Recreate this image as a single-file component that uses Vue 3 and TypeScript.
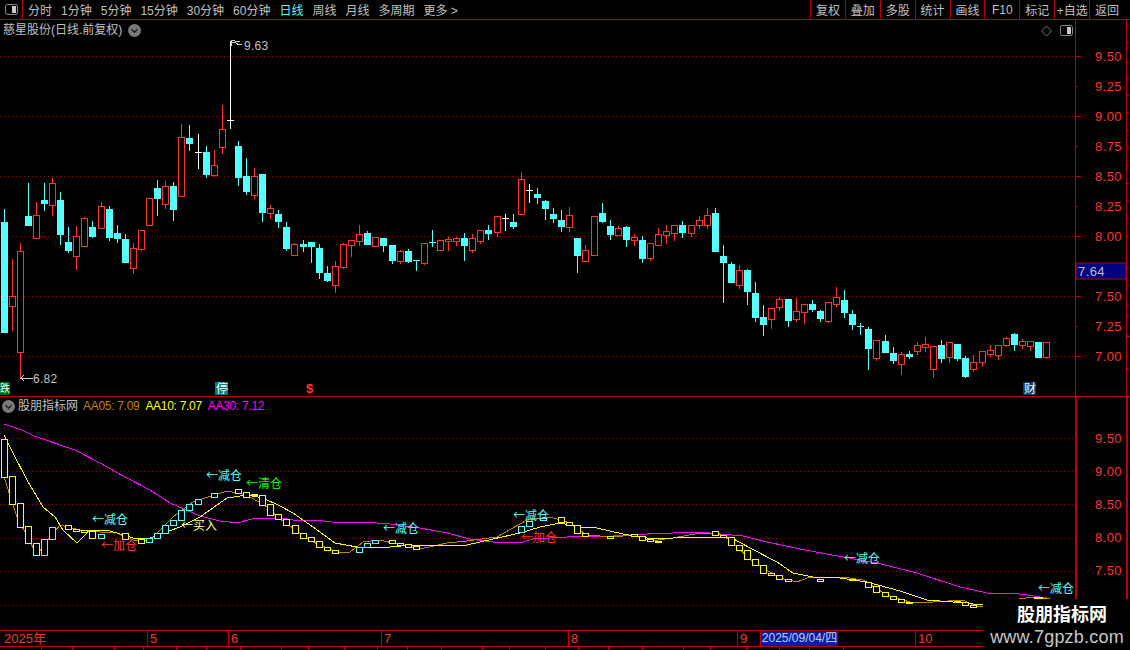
<script setup lang="ts">
type Candle = [number, string, number, number, number, number]
const candles: Candle[] = [
  [4,'c',222,332,209,332],[12,'r',296,306,259,330],[20,'r',251,352,243,378],[28,'c',216,225,183,225],[36,'r',215,238,202,238],
  [44,'c',200,203,183,210],[52,'r',183,205,178,215],[60,'c',200,234,192,244],[68,'c',242,250,227,252],[76,'r',236,256,226,269],
  [84,'r',218,246,217,246],[92,'c',227,236,221,237],[101,'r',206,228,202,228],[109,'c',209,237,206,240],[117,'c',233,238,225,242],
  [125,'c',239,262,234,262],[133,'r',248,268,243,273],[141,'r',230,249,230,250],[149,'r',198,225,198,225],[157,'c',188,198,180,215],
  [165,'r',186,204,181,208],[173,'c',186,209,182,220],[181,'r',137,196,124,196],[189,'c',138,143,125,150],[198,'w',152,152,134,168],
  [206,'c',152,174,146,177],[214,'r',165,175,150,176],[222,'r',129,147,105,153],[230,'w',120,120,41,128],[238,'c',146,177,141,185],
  [246,'c',176,191,158,194],[254,'r',176,195,168,198],[262,'c',174,212,174,221],[270,'r',208,213,205,218],[278,'c',214,221,210,227],
  [286,'c',227,248,222,250],[294,'r',244,255,243,255],[303,'c',244,246,240,251],[311,'c',242,246,242,262],[319,'c',248,272,244,278],
  [327,'c',273,280,266,281],[335,'r',266,285,261,292],[343,'r',244,267,243,268],[351,'r',240,245,240,256],[359,'r',234,241,225,245],
  [367,'c',233,244,231,244],[375,'r',237,246,237,246],[383,'c',238,245,238,251],[392,'c',245,260,245,263],[400,'r',251,261,250,263],
  [408,'c',251,261,249,262],[416,'x',260,260,260,270],[424,'r',243,263,243,264],[432,'x',242,242,230,246],[440,'r',240,250,240,250],
  [448,'r',239,241,237,250],[456,'r',238,241,237,245],[464,'c',238,245,233,260],[472,'r',238,250,234,252],[480,'r',230,241,230,243],
  [488,'c',230,233,225,239],[497,'r',216,232,216,236],[505,'w',218,218,214,230],[513,'c',222,226,214,228],[521,'r',179,214,172,214],
  [529,'w',190,190,184,202],[537,'c',194,197,188,203],[545,'c',201,208,200,219],[553,'c',214,218,208,222],[561,'c',220,226,210,231],
  [569,'r',215,227,207,231],[577,'c',238,255,238,272],[585,'r',250,261,245,261],[594,'r',216,255,216,255],[602,'c',213,221,203,222],
  [610,'c',226,234,220,239],[618,'r',228,235,226,235],[626,'c',227,239,226,246],[634,'r',237,240,234,245],[642,'c',240,258,236,262],
  [650,'r',243,258,243,260],[658,'r',234,245,228,245],[666,'r',231,235,225,243],[674,'r',225,233,225,240],[682,'c',225,232,221,237],
  [691,'r',225,233,225,236],[699,'r',220,225,216,228],[707,'r',215,225,208,228],[715,'c',213,251,208,251],[723,'c',256,262,245,302],
  [731,'c',264,282,262,282],[739,'r',270,285,265,288],[747,'c',270,291,269,304],[755,'c',293,317,282,321],[763,'c',317,324,305,335],
  [771,'r',308,319,308,328],[779,'r',299,307,297,310],[788,'c',299,320,299,326],[796,'r',311,319,298,321],[804,'r',304,312,304,323],
  [812,'c',304,309,300,311],[820,'c',311,318,310,321],[828,'r',302,321,302,322],[836,'r',297,304,287,306],[844,'c',300,312,290,317],
  [852,'c',314,324,310,329],[860,'x',326,326,323,334],[868,'c',329,348,327,369],[876,'r',340,358,340,360],[885,'c',341,352,335,352],
  [893,'c',353,360,347,363],[901,'r',354,364,352,374],[909,'c',354,356,351,358],[917,'r',345,351,342,354],[925,'r',344,347,337,351],
  [933,'r',346,369,346,377],[941,'c',345,358,340,362],[949,'r',342,357,342,362],[957,'c',344,358,344,360],[965,'c',358,376,356,377],
  [973,'r',362,369,355,371],[982,'r',351,362,351,366],[990,'r',350,354,345,356],[998,'r',345,355,345,359],[1006,'r',338,345,337,346],
  [1014,'c',334,344,333,350],[1022,'r',341,345,339,348],[1030,'r',341,346,341,350],[1038,'c',342,357,342,357],[1046,'r',342,357,342,358],
]
const CYAN = '#54ffff'
const RED = '#ff3232'
const YELLOW = '#ffff00'
const ORANGE = '#c08000'
const MAGENTA = '#ff00ff'

const upperFills = candles.filter(c => c[1] === 'c')
const upperHollow = candles.filter(c => c[1] === 'r')
const upperCross = candles.filter(c => c[1] === 'w' || c[1] === 'x')

function wickColor(t: string): string {
  if (t === 'r') return RED
  if (t === 'w') return '#ffffff'
  return CYAN
}

const upperGrid = [56.5, 116.5, 176.5, 236.5, 296.5, 356.5]
const lowerGrid = [438.5, 471.5, 504.5, 538.5, 571.5, 605.5]
const upperTicks = [
  { y: 57, l: '9.50' }, { y: 87, l: '9.25' }, { y: 117, l: '9.00' }, { y: 147, l: '8.75' }, { y: 177, l: '8.50' },
  { y: 207, l: '8.25' }, { y: 237, l: '8.00' }, { y: 297, l: '7.50' }, { y: 327, l: '7.25' }, { y: 357, l: '7.00' },
]
const lowerTicks = [
  { y: 439, l: '9.50' }, { y: 472, l: '9.00' }, { y: 505, l: '8.50' }, { y: 538, l: '8.00' }, { y: 571, l: '7.50' },
]
const edgeTicks = [25, 42, 62, 78, 95, 112, 130, 148, 165, 183, 200, 218, 236, 268, 285, 305, 316, 336, 368]

type Box = [number, number, number]
const yellowBoxes: Box[] = [
  [4,439,477],[12,476,504],[20,503,527],[28,526,543],[36,543,555],[68,525,529],[76,529,531],[84,530,532],[92,531,538],
  [125,533,539],[141,539,543],[238,489,493],[246,492,497],[254,494,495],[262,495,505],[270,504,515],[278,514,519],
  [286,519,525],[295,525,533],[303,533,538],[311,537,541],[319,541,547],[327,547,550],[335,550,553],[392,540,543],
  [400,543,545],[408,544,547],[416,546,549],[561,517,522],[569,522,525],[577,525,533],[585,533,536],[610,536,538],
  [634,534,536],[642,536,540],[650,539,541],[658,541,542],[715,531,535],[723,535,537],[731,537,545],[739,545,550],
  [747,550,559],[755,559,565],[763,565,573],[771,573,575],[779,575,579],[788,579,581],[820,579,581],[852,579,580],
  [868,582,587],[876,586,592],[885,592,596],[893,596,599],[901,599,602],[909,602,603],[957,601,602],[965,602,605],[973,605,607],
]
const cyanBoxes: Box[] = [
  [44,539,555],[52,527,539],[101,534,538],[149,538,542],[157,533,538],[165,525,533],[173,520,525],[181,510,520],[189,504,510],
  [198,499,504],[214,493,497],[359,547,552],[367,543,547],[375,540,543],[521,526,532],[529,521,526],[543,518,520],
]

function pts(list: number[][]): string {
  return list.map(p => p.join(',')).join(' ')
}
const aa30 = pts([[4,424],[22,430],[34,436],[75,450],[100,463],[125,477],[150,490],[170,503],[200,516],[220,521],[237,523],[252,519],[280,518],[293,520],[323,521],[340,523],[363,522],[390,524],[420,528],[447,533],[470,539],[493,542],[523,542],[533,539],[567,537],[613,536],[647,534],[700,532],[720,534],[743,536],[767,542],[800,549],[843,557],[877,563],[917,573],[960,587],[987,593],[1020,594],[1047,598]])
const aa10 = pts([[4,435],[13,453],[27,480],[43,507],[55,517],[63,530],[77,543],[90,530],[110,531],[133,538],[150,538],[180,527],[200,517],[227,498],[247,495],[263,498],[280,506],[293,513],[313,527],[335,543],[357,547],[370,547],[390,547],[413,545],[467,545],[493,539],[520,533],[540,527],[560,523],[580,527],[597,528],[623,534],[647,538],[673,538],[700,537],[730,537],[750,548],[777,562],[793,573],[813,577],[840,578],[867,582],[900,591],[927,600],[953,602],[983,605]])
const aa05 = pts([[4,477],[17,517],[37,555],[45,543],[60,525],[80,530],[100,532],[117,533],[133,540],[150,540],[173,517],[193,502],[227,491],[247,495],[267,507],[280,519],[313,542],[337,552],[350,552],[363,542],[380,540],[397,544],[420,549],[447,543],[467,541],[497,537],[527,520],[550,517],[567,522],[587,535],[613,537],[633,535],[650,541],[673,538],[700,533],[717,533],[730,540],[753,562],[780,578],[797,582],[810,577],[843,577],[863,580],[887,595],[913,603],[933,602],[963,600],[977,607],[983,606]])
const aa05Tail = pts([[1012,600],[1033,597],[1050,599]])

const signals = [
  { x: 92, y: 524, t: '←减仓', c: CYAN }, { x: 101, y: 550, t: '←加仓', c: RED }, { x: 181, y: 530, t: '←买入', c: '#ffffa0' },
  { x: 206, y: 480, t: '←减仓', c: CYAN }, { x: 246, y: 488, t: '←清仓', c: '#00ff00' }, { x: 383, y: 533, t: '←减仓', c: CYAN },
  { x: 513, y: 520, t: '←减仓', c: CYAN }, { x: 521, y: 542, t: '←加仓', c: RED }, { x: 844, y: 563, t: '←减仓', c: CYAN },
  { x: 1038, y: 593, t: '←减仓', c: CYAN },
]
const tools = ['分时', '1分钟', '5分钟', '15分钟', '30分钟', '60分钟', '日线', '周线', '月线', '多周期', '更多 >']
const rightTools = ['复权', '叠加', '多股', '统计', '画线', 'F10', '标记', '+自选', '返回']
const months = [
  { w: 148, t: '2025年' }, { w: 81, t: '5' }, { w: 153, t: '6' }, { w: 187, t: '7' }, { w: 169, t: '8' }, { w: 23, t: '9' },
]
const statusCells = [42, 31, 42, 29, 33, 30, 34, 41, 27, 36, 33, 30, 34, 41, 27, 36, 33, 30, 34, 41, 27, 36, 33, 30, 34]
</script>

<template>
  <div class="screen">
    <header class="toolbar">
      <div class="iconcell">
        <svg width="13" height="11" viewBox="0 0 13 11">
          <rect x=".5" y=".5" width="12" height="10" rx="2" fill="#000" stroke="#8a8a8a" />
          <rect x="7" y="2" width="4" height="7" fill="#c8c8c8" />
        </svg>
      </div>
      <nav class="periods">
        <span v-for="t in tools" :key="t" :class="{ active: t === '日线' }">{{ t }}</span>
      </nav>
      <nav class="actions">
        <span v-for="t in rightTools" :key="t">{{ t }}</span>
      </nav>
    </header>

    <section class="panel upper">
      <div class="plotwrap">
        <svg class="plot" width="1075" height="376" viewBox="0 20 1075 376" shape-rendering="crispEdges">
          <line v-for="y in upperGrid" :key="y" x1="0" x2="1075" :y1="y" :y2="y" class="grid" />
          <g v-for="c in candles" :key="'w' + c[0]" :fill="wickColor(c[1])">
            <rect :x="c[0]" :y="c[4]" width="1" :height="c[5] - c[4] + 1" />
          </g>
          <rect v-for="c in upperFills" :key="'f' + c[0]" :x="c[0] - 3" :y="c[2]" width="7" :height="c[3] - c[2] + 1" :fill="CYAN" />
          <rect v-for="c in upperHollow" :key="'h' + c[0]" :x="c[0] - 2.5" :y="c[2] + 0.5" width="6" :height="c[3] - c[2]" fill="#000" :stroke="RED" />
          <rect v-for="c in upperCross" :key="'x' + c[0]" :x="c[0] - 3" :y="c[2]" width="7" height="1" :fill="wickColor(c[1])" />

          <polyline points="240,41 235,41 232,40 231,43 231,46" class="note" />
          <polyline points="232,42 236,43 239,45 242,44" class="note" />
          <text x="244" y="50" class="anno">9.63</text>
          <polyline points="33,378 21,378 24,375" class="note" />
          <polyline points="21,378 24,381" class="note" />
          <text x="33" y="383" class="anno">6.82</text>

          <rect x="0" y="382" width="10" height="13" fill="#006c00" />
          <text x="0" y="392" class="tag small">跌</text>
          <rect x="215" y="382" width="13" height="13" fill="#008080" />
          <text x="216" y="393" class="tag">停</text>
          <text x="306" y="393" class="dollar">$</text>
          <rect x="1023" y="382" width="13" height="13" fill="#0a3a6a" />
          <text x="1024" y="393" class="tag">财</text>
        </svg>
        <div class="title">
          <span>慈星股份(日线.前复权)</span>
          <svg width="13" height="13" viewBox="0 0 13 13">
            <circle cx="6.5" cy="6.5" r="6.5" fill="#7a7a7a" />
            <path d="M3.5 5.2 6.5 8.2 9.5 5.2" fill="none" stroke="#1c1c1c" stroke-width="1.4" />
          </svg>
        </div>
        <svg class="corner" width="32" height="12" viewBox="0 0 32 12">
          <path d="M5.5 1 10.5 6 5.5 11 .5 6Z" fill="none" stroke="#7a7a7a" />
          <rect x="19.5" y=".5" width="12" height="10" rx="2" fill="#000" stroke="#8a8a8a" />
          <rect x="26" y="2" width="4" height="7" fill="#c8c8c8" />
        </svg>
      </div>
      <div class="axis thin">
        <svg width="50" height="376" viewBox="0 20 50 376">
          <g v-for="t in upperTicks" :key="t.l">
            <rect x="0" :y="t.y - 1" :width="t.l === '7.25' || t.l === '8.75' || t.l === '9.25' || t.l === '8.25' ? 2 : 5" height="1" fill="#c00000" />
            <text x="46" :y="t.y + 4" class="axnum" text-anchor="end">{{ t.l }}</text>
          </g>
          <rect x="0" y="263" width="50" height="16" fill="#000080" stroke="#c00000" />
          <text x="2" y="276" class="price">7.64</text>
        </svg>
      </div>
      <svg class="edge" width="3" height="376" viewBox="0 20 3 376" shape-rendering="crispEdges">
        <rect v-for="y in edgeTicks" :key="y" x="0" :y="y" :width="y === 336 ? 3 : 2" height="1" fill="#b40000" />
      </svg>
    </section>

    <section class="panel lower">
      <div class="plotwrap">
        <svg class="plot" width="1075" height="233" viewBox="0 397 1075 233" shape-rendering="crispEdges">
          <line v-for="y in lowerGrid" :key="y" x1="0" x2="1075" :y1="y" :y2="y" class="grid" />
          <polyline :points="aa30" class="ln" :stroke="MAGENTA" />
          <polyline :points="aa05" class="ln" :stroke="ORANGE" />
          <polyline :points="aa05Tail" class="ln" :stroke="ORANGE" />
          <polyline :points="aa10" class="ln" :stroke="YELLOW" />
          <rect v-for="b in yellowBoxes" :key="'yb' + b[0]" :x="b[0] - 2.5" :y="b[1] + 0.5" width="6" :height="b[2] - b[1]" fill="#000" :stroke="YELLOW" />
          <rect v-for="b in cyanBoxes" :key="'cb' + b[0]" :x="b[0] - 2.5" :y="b[1] + 0.5" width="6" :height="b[2] - b[1]" fill="#000" :stroke="CYAN" />
          <rect x="1034" y="597" width="9" height="2" :fill="YELLOW" />
          <text v-for="s in signals" :key="s.x" :x="s.x" :y="s.y" :fill="s.c" class="signal">{{ s.t }}</text>
        </svg>
        <div class="legend">
          <svg width="13" height="13" viewBox="0 0 13 13">
            <circle cx="6.5" cy="6.5" r="6.5" fill="#7a7a7a" />
            <path d="M3.5 5.2 6.5 8.2 9.5 5.2" fill="none" stroke="#1c1c1c" stroke-width="1.4" />
          </svg>
          <span class="lname">股朋指标网</span>
          <span class="val a05">AA05: 7.09</span>
          <span class="val a10">AA10: 7.07</span>
          <span class="val a30">AA30: 7.12</span>
        </div>
      </div>
      <div class="axis thick">
        <svg width="49" height="233" viewBox="0 397 49 233">
          <g v-for="t in lowerTicks" :key="t.l">
            <text x="45" :y="t.y + 4" class="axnum" text-anchor="end">{{ t.l }}</text>
          </g>
        </svg>
      </div>
    </section>

    <footer class="timeaxis">
      <span v-for="m in months" :key="m.t" class="month" :style="{ width: m.w + 'px' }">{{ m.t }}</span>
      <span class="cursor">2025/09/04/四</span>
      <span class="month" :style="{ width: '78px' }"></span>
      <span class="month last">10</span>
    </footer>
    <div class="status">
      <span v-for="(w, i) in statusCells" :key="i" :style="{ width: w + 'px' }"></span>
    </div>

    <aside class="watermark">
      <strong>股朋指标网</strong>
      <em>www.7gpzb.com</em>
    </aside>
  </div>
</template>

<style scoped>
.screen {
  position: relative;
  width: 1130px;
  height: 650px;
  overflow: hidden;
  background: #000;
  color: #c0c0c0;
  font: 12px "Liberation Sans", "Noto Sans CJK SC", sans-serif;
}
.toolbar {
  display: flex;
  align-items: stretch;
  height: 20px;
  box-sizing: border-box;
  border-bottom: 1px solid #b40000;
}
.iconcell {
  display: flex;
  align-items: center;
  justify-content: center;
  width: 23px;
  border-right: 1px solid #b40000;
  box-sizing: border-box;
}
.periods {
  display: flex;
  align-items: center;
  gap: 9px;
  padding-left: 5px;
}
.periods .active { color: #54ffff; }
.actions {
  display: flex;
  margin-left: auto;
  padding-right: 6px;
}
.actions span {
  display: flex;
  align-items: center;
  justify-content: center;
  width: 34.9px;
  box-sizing: border-box;
  border-left: 1px solid #b40000;
}
.panel { display: flex; }
.upper { height: 377px; border-bottom: 1px solid #c00000; box-sizing: border-box; }
.lower { height: 233px; }
.plotwrap { position: relative; width: 1075px; }
.plot { display: block; }
.title {
  position: absolute;
  left: 3px;
  top: 2px;
  display: flex;
  align-items: center;
  gap: 6px;
  line-height: 16px;
}
.corner { position: absolute; top: 5px; left: 1041px; }
.legend {
  position: absolute;
  left: 2px;
  top: 1px;
  display: flex;
  align-items: center;
  line-height: 16px;
}
.legend span { margin-right: 6px; }
.lname { margin-left: 3px; margin-right: 5px !important; }
.val { letter-spacing: -.3px; }
.a05 { color: #c08000; }
.a10 { color: #ffff00; }
.a30 { color: #ff00ff; }
.axis { box-sizing: content-box; border-style: solid; border-color: #c00000; border-width: 0; }
.axis svg { display: block; }
.thin { border-left-width: 1px; border-right-width: 1px; width: 50px; }
.thick { border-left-width: 2px; border-right-width: 2px; width: 49px; }
.edge { display: block; }
.grid { stroke: #8c0000; stroke-dasharray: 1 3; shape-rendering: geometricPrecision; }
.ln { fill: none; stroke-width: 1; }
.note { fill: none; stroke: #d0d0d0; stroke-width: 1; }
.anno { fill: #c0c0c0; font: 12px "Liberation Sans", sans-serif; letter-spacing: .3px; }
.tag { fill: #fff; font: 12px "Noto Sans CJK SC", sans-serif; }
.tag.small { font-size: 10px; }
.dollar { fill: #ff3232; font: bold 13px "Liberation Sans", sans-serif; }
.signal { font: 12px "Noto Sans CJK SC", sans-serif; }
.axnum { fill: #ff3232; font: 13px "Liberation Sans", sans-serif; letter-spacing: .4px; }
.price { fill: #c0c0c0; font: 13px "Liberation Sans", sans-serif; letter-spacing: .4px; }
.timeaxis {
  display: flex;
  height: 16px;
  box-sizing: border-box;
  border-top: 1px solid #c00000;
  line-height: 15px;
  color: #ff3232;
  font-size: 13px;
}
.month {
  flex: none;
  box-sizing: border-box;
  padding-left: 2px;
  border-right: 1px solid #c00000;
}
.month:first-child { padding-left: 4px; }
.month.last { width: 200px; border-right: 0; }
.cursor {
  flex: none;
  box-sizing: border-box;
  width: 77px;
  background: #0020a0;
  color: #c8c8ff;
  text-align: center;
  font-size: 12px;
  white-space: nowrap;
}
.status {
  display: flex;
  height: 4px;
  border-top: 1px solid #c00000;
}
.status span { flex: none; box-sizing: border-box; border-right: 1px solid #c00000; }
.watermark {
  position: absolute;
  right: 0;
  bottom: 0;
  width: 146px;
  height: 51px;
  background: #000;
  display: flex;
  flex-direction: column;
  align-items: center;
  color: #fff;
}
.watermark strong {
  font: bold 18px/26px "Noto Sans CJK SC", sans-serif;
  margin: 1px 0 1px 10px;
}
.watermark em {
  font: normal 18px/20px "Liberation Sans", sans-serif;
  letter-spacing: .2px;
  color: #c8c8c8;
}
</style>
